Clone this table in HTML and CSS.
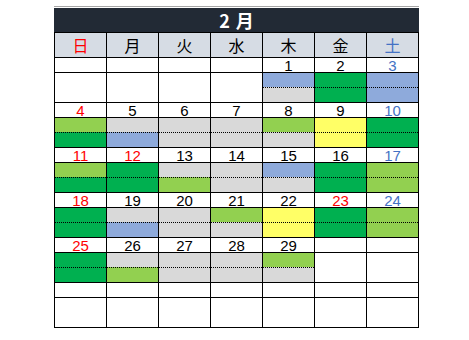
FILE: index.html
```html
<!DOCTYPE html>
<html lang="ja">
<head>
<meta charset="utf-8">
<title>2月 カレンダー</title>
<link rel="stylesheet" href="styles.css">
</head>
<body>
<div class="sheet">
  <div class="title">2 月</div>
  <div class="cal">
    <div class="dow sun">日</div><div class="dow">月</div><div class="dow">火</div><div class="dow">水</div><div class="dow">木</div><div class="dow">金</div><div class="dow sat">土</div>

    <div class="date"></div><div class="date"></div><div class="date"></div><div class="date"></div><div class="date">1</div><div class="date">2</div><div class="date sat">3</div>
    <div class="blk"></div><div class="blk"></div><div class="blk"></div><div class="blk"></div>
    <div class="blk"><div class="half b"></div><div class="half gr"></div></div>
    <div class="blk"><div class="half g"></div><div class="half g"></div></div>
    <div class="blk"><div class="half b"></div><div class="half b"></div></div>

    <div class="date sun">4</div><div class="date">5</div><div class="date">6</div><div class="date">7</div><div class="date">8</div><div class="date">9</div><div class="date sat">10</div>
    <div class="blk"><div class="half lg"></div><div class="half g"></div></div>
    <div class="blk"><div class="half gr"></div><div class="half b"></div></div>
    <div class="blk"><div class="half gr"></div><div class="half gr"></div></div>
    <div class="blk"><div class="half gr"></div><div class="half gr"></div></div>
    <div class="blk"><div class="half lg"></div><div class="half gr"></div></div>
    <div class="blk"><div class="half y"></div><div class="half y"></div></div>
    <div class="blk"><div class="half g"></div><div class="half g"></div></div>

    <div class="date sun">11</div><div class="date sun">12</div><div class="date">13</div><div class="date">14</div><div class="date">15</div><div class="date">16</div><div class="date sat">17</div>
    <div class="blk"><div class="half lg"></div><div class="half g"></div></div>
    <div class="blk"><div class="half g"></div><div class="half g"></div></div>
    <div class="blk"><div class="half gr"></div><div class="half lg"></div></div>
    <div class="blk"><div class="half gr"></div><div class="half gr"></div></div>
    <div class="blk"><div class="half b"></div><div class="half gr"></div></div>
    <div class="blk"><div class="half g"></div><div class="half g"></div></div>
    <div class="blk"><div class="half lg"></div><div class="half lg"></div></div>

    <div class="date sun">18</div><div class="date">19</div><div class="date">20</div><div class="date">21</div><div class="date">22</div><div class="date sun">23</div><div class="date sat">24</div>
    <div class="blk"><div class="half g"></div><div class="half g"></div></div>
    <div class="blk"><div class="half gr"></div><div class="half b"></div></div>
    <div class="blk"><div class="half gr"></div><div class="half gr"></div></div>
    <div class="blk"><div class="half lg"></div><div class="half gr"></div></div>
    <div class="blk"><div class="half y"></div><div class="half y"></div></div>
    <div class="blk"><div class="half g"></div><div class="half g"></div></div>
    <div class="blk"><div class="half lg"></div><div class="half lg"></div></div>

    <div class="date sun">25</div><div class="date">26</div><div class="date">27</div><div class="date">28</div><div class="date">29</div><div class="date"></div><div class="date"></div>
    <div class="blk"><div class="half g"></div><div class="half g"></div></div>
    <div class="blk"><div class="half gr"></div><div class="half lg"></div></div>
    <div class="blk"><div class="half gr"></div><div class="half gr"></div></div>
    <div class="blk"><div class="half gr"></div><div class="half gr"></div></div>
    <div class="blk"><div class="half lg"></div><div class="half gr"></div></div>
    <div class="blk"></div><div class="blk"></div>

    <div class="date"></div><div class="date"></div><div class="date"></div><div class="date"></div><div class="date"></div><div class="date"></div><div class="date"></div>
    <div class="blk"></div><div class="blk"></div><div class="blk"></div><div class="blk"></div><div class="blk"></div><div class="blk"></div><div class="blk"></div>
  </div>
</div>
</body>
</html>
```

FILE: styles.css
```css
html, body {
  margin: 0;
  padding: 0;
  background: #ffffff;
}

.sheet {
  margin: 6px 0 0 54px;
  width: 365px;
  border-top: 1px solid #a6a6a6;
  padding-top: 1px;
  font-family: "Noto Sans CJK JP", "Noto Sans", sans-serif;
}

.title {
  height: 24px;
  line-height: 24px;
  background: #222a35;
  color: #ffffff;
  font-weight: bold;
  font-size: 18px;
  text-align: center;
  word-spacing: 2px;
}

.cal {
  display: grid;
  grid-template-columns: repeat(7, 51px);
  gap: 1px;
  padding: 1px;
  background: #000000;
}

.dow {
  height: 24px;
  line-height: 24px;
  background: #d6dce4;
  font-size: 16px;
  text-align: center;
  color: #000000;
}

.date {
  box-sizing: border-box;
  height: 14px;
  padding-top: 1px;
  line-height: 14px;
  background: #ffffff;
  font-family: "Liberation Sans", Arial, sans-serif;
  font-size: 15px;
  text-align: center;
  color: #000000;
}

.sun { color: #ff0000; }
.sat { color: #4472c4; }

.blk {
  height: 29px;
  background: #ffffff;
  display: flex;
  flex-direction: column;
}

.half {
  height: 14px;
}

.half + .half {
  border-top: 1px dotted #000000;
}

.g { background: #00b050; }
.lg { background: #92d050; }
.b { background: #8eaadb; }
.gr { background: #d9d9d9; }
.y { background: #ffff66; }
```
